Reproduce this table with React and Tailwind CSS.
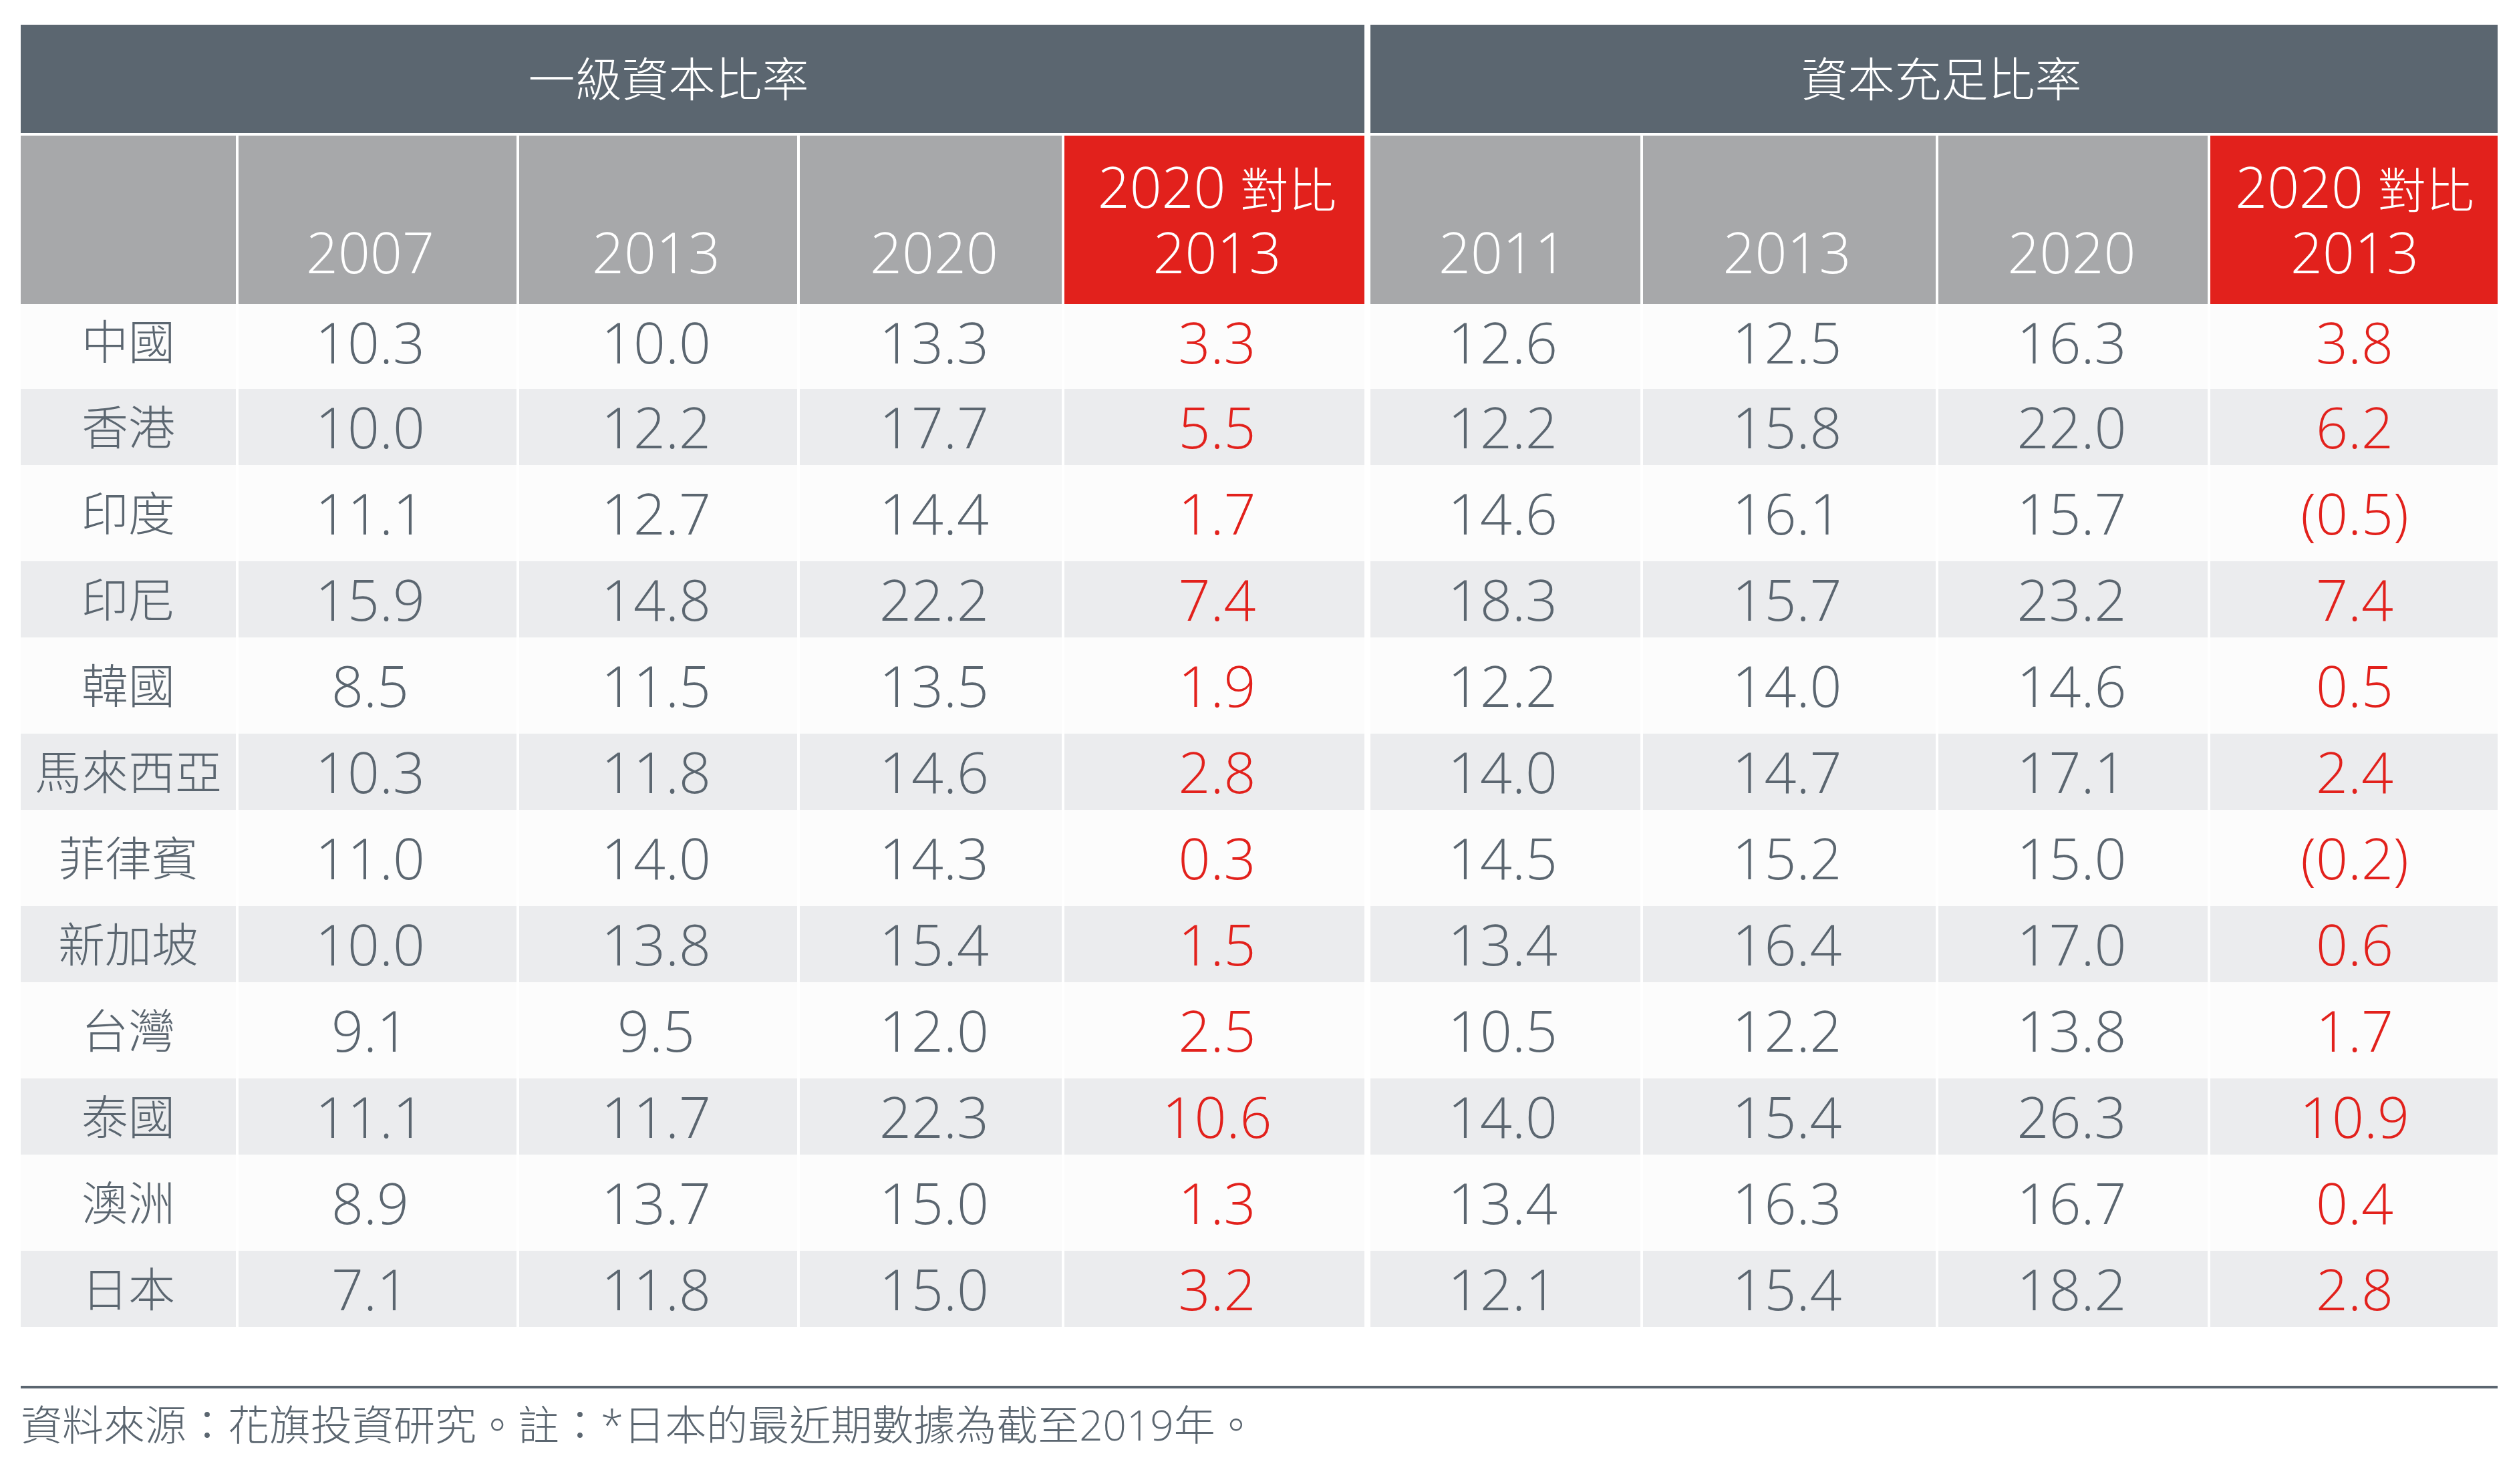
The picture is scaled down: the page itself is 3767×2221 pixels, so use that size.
const cols = [
  'w-[322px]',
  'w-[416px] pr-[22px]',
  'w-[416px] pr-[6px]',
  'w-[392px] pl-[10px]',
  'w-[449px] pl-[8px]',
  'w-[404px] ml-[5px] pr-[8px]',
  'w-[438px] pr-[7px]',
  'w-[403px] pr-[4px]',
  'w-[430px] pl-[2px]',
]

const rows = [
  ['中國', '10.3', '10.0', '13.3', '3.3', '12.6', '12.5', '16.3', '3.8'],
  ['香港', '10.0', '12.2', '17.7', '5.5', '12.2', '15.8', '22.0', '6.2'],
  ['印度', '11.1', '12.7', '14.4', '1.7', '14.6', '16.1', '15.7', '(0.5)'],
  ['印尼', '15.9', '14.8', '22.2', '7.4', '18.3', '15.7', '23.2', '7.4'],
  ['韓國', '8.5', '11.5', '13.5', '1.9', '12.2', '14.0', '14.6', '0.5'],
  ['馬來西亞', '10.3', '11.8', '14.6', '2.8', '14.0', '14.7', '17.1', '2.4'],
  ['菲律賓', '11.0', '14.0', '14.3', '0.3', '14.5', '15.2', '15.0', '(0.2)'],
  ['新加坡', '10.0', '13.8', '15.4', '1.5', '13.4', '16.4', '17.0', '0.6'],
  ['台灣', '9.1', '9.5', '12.0', '2.5', '10.5', '12.2', '13.8', '1.7'],
  ['泰國', '11.1', '11.7', '22.3', '10.6', '14.0', '15.4', '26.3', '10.9'],
  ['澳洲', '8.9', '13.7', '15.0', '1.3', '13.4', '16.3', '16.7', '0.4'],
  ['日本', '7.1', '11.8', '15.0', '3.2', '12.1', '15.4', '18.2', '2.8'],
]

const years = ['', '2007', '2013', '2020', null, '2011', '2013', '2020', null]

function rowStyle(i) {
  if (i === 0) return 'h-[127px] bg-[#fcfcfc] pb-[14px]'
  if (i % 2 === 1) return 'h-[114px] bg-[#ebecee]'
  return 'h-[144px] bg-[#fcfcfc]'
}

export default function App() {
  return (
    <div className="w-[3767px] h-[2221px] bg-white pl-[31px] pt-[37px] font-['Open_Sans','Noto_Sans_CJK_TC',sans-serif] font-light text-[#5b6670]">
      {/* group titles */}
      <div className="flex gap-[9px]">
        <div className="flex h-[162px] w-[2011px] items-center justify-center bg-[#5b6670] pr-[72px] text-[70px] text-white">
          一級資本比率
        </div>
        <div className="flex h-[162px] w-[1687px] items-center justify-center bg-[#5b6670] pl-[22px] text-[70px] text-white">
          資本充足比率
        </div>
      </div>

      {/* year headers */}
      <div className="mt-[4px] flex gap-[4px]">
        {years.map((y, i) => (
          <div
            key={i}
            className={`${cols[i]} flex h-[252px] flex-col items-center justify-end pb-[29px] text-[84px] leading-[98px] text-white ${
              y === null ? 'bg-[#e2211c]' : 'bg-[#a7a8aa]'
            }`}
          >
            {y === null ? (
              <>
                <span className="block h-[98px] leading-[98px]">
                  2020 <span className="text-[72px] leading-[98px]">對比</span>
                </span>
                <span className="block h-[98px]">2013</span>
              </>
            ) : (
              <span>{y}</span>
            )}
          </div>
        ))}
      </div>

      {/* data */}
      <div className="flex flex-col">
        {rows.map((r, i) => (
          <div key={r[0]} className="flex gap-[4px]">
            {r.map((v, j) => (
              <div
                key={j}
                className={`${cols[j]} ${rowStyle(i)} flex items-center justify-center ${
                  j === 0 ? 'text-[70px]' : 'text-[84px]'
                } ${j === 4 || j === 8 ? 'text-[#e2211c]' : ''}`}
              >
                {v}
              </div>
            ))}
          </div>
        ))}
      </div>

      <div className="mt-[88px] h-[4px] w-[3707px] bg-[#5b6670]" />
      <p className="mt-[14px] text-[62px] leading-[80px]">
        資料來源：花旗投資研究。註：*日本的最近期數據為截至2019年。
      </p>
    </div>
  )
}
